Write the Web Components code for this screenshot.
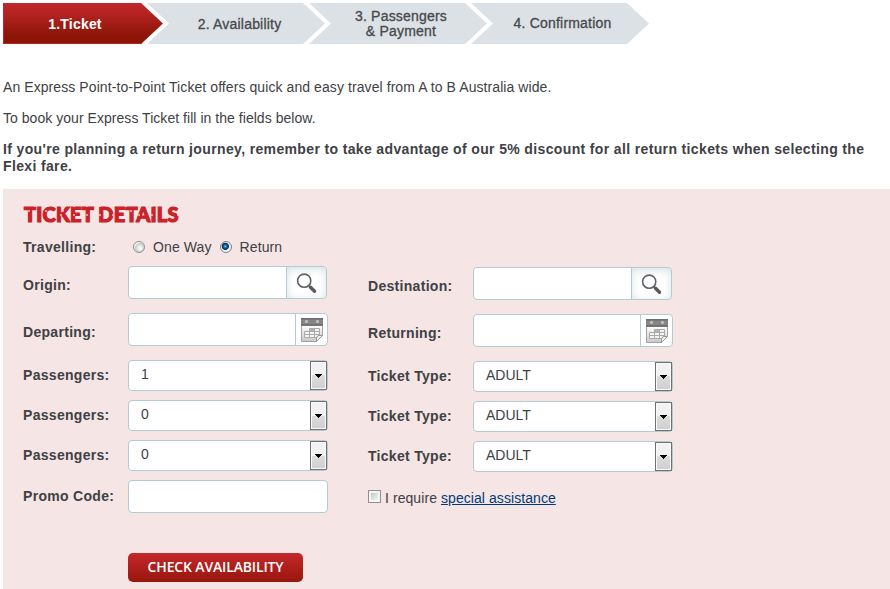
<!DOCTYPE html>
<html lang="en">
<head>
<meta charset="utf-8">
<title>Express Ticket</title>
<style>
body {
  margin: 0;
  padding: 3px 0 0 3px;
  width: 887px;
  height: 586px;
  overflow: hidden;
  background: #fff;
  color: #404145;
  font: 14px/17px "Liberation Sans", Arial, sans-serif;
}

.intro {
  margin-top: 35px;
}

.intro p {
  margin: 0 0 14px;
  letter-spacing: .04px;
}

.intro .lead {
  letter-spacing: .08px;
}

.intro .notice {
  font-weight: bold;
  letter-spacing: .36px;
}
</style>
</head>
<body>

<booking-steps>
  <booking-step active>1.Ticket</booking-step>
  <booking-step style="--nudge: 7px; --drop: 2px">2. Availability</booking-step>
  <booking-step style="--nudge: 6px; --drop: 1px">3. Passengers<br>&amp; Payment</booking-step>
  <booking-step style="--nudge: 5px">4. Confirmation</booking-step>
</booking-steps>

<div class="intro">
  <p class="lead">An Express Point-to-Point Ticket offers quick and easy travel from A to B Australia wide.</p>
  <p>To book your Express Ticket fill in the fields below.</p>
  <p class="notice">If you're planning a return journey, remember to take advantage of our 5% discount for all return tickets when selecting the Flexi fare.</p>
</div>

<ticket-panel>
  <span slot="title">Ticket Details</span>
  <form-row slot="travel" label="Travelling:">
    <radio-option>One Way</radio-option>
    <radio-option checked>Return</radio-option>
  </form-row>

  <form-row slot="left" label="Origin:" low><lookup-field type="search"></lookup-field></form-row>
  <form-row slot="left" label="Departing:" low><lookup-field type="date"></lookup-field></form-row>
  <form-row slot="left" label="Passengers:"><select-box>1</select-box></form-row>
  <form-row slot="left" label="Passengers:"><select-box>0</select-box></form-row>
  <form-row slot="left" label="Passengers:"><select-box>0</select-box></form-row>
  <form-row slot="left" label="Promo Code:"><lookup-field></lookup-field></form-row>

  <form-row slot="right" label="Destination:" low><lookup-field type="search"></lookup-field></form-row>
  <form-row slot="right" label="Returning:" low><lookup-field type="date"></lookup-field></form-row>
  <form-row slot="right" label="Ticket Type:"><select-box>ADULT</select-box></form-row>
  <form-row slot="right" label="Ticket Type:"><select-box>ADULT</select-box></form-row>
  <form-row slot="right" label="Ticket Type:"><select-box>ADULT</select-box></form-row>
  <check-option slot="right">I require <a href="#">special assistance</a></check-option>

  <action-button slot="actions">CHECK AVAILABILITY</action-button>
</ticket-panel>

<script>
const FIELD_BORDER = "#b3cbd1";
const PANEL = "#f5e5e4";

// every element here is static markup in an open root
class BaseElement extends HTMLElement {
  constructor() {
    super();
    this.attachShadow({ mode: "open" });
  }

  connectedCallback() {
    this.shadowRoot.innerHTML = `<style>${this.css()}</style>${this.html()}`;
  }

  css() { return ""; }
  html() { return "<slot></slot>"; }
}

class BookingSteps extends BaseElement {
  css() {
    return `
:host { display: flex; height: 41px; }
::slotted(booking-step:not(:first-child)) { margin-left: -16px; }
`;
  }
}

class BookingStep extends BaseElement {
  css() {
    return `
:host {
  display: flex;
  align-items: center;
  justify-content: center;
  box-sizing: border-box;
  width: 178px;
  padding: var(--drop, 0) 0 0 var(--nudge, 0);
  background: #dce1e5;
  clip-path: polygon(0 0, 156px 0, 100% 50%, 156px 100%, 0 100%, 22px 50%);
  color: #46494d;
  font-size: 14px;
  line-height: 15px;
  text-align: center;
  letter-spacing: .2px;
  -webkit-text-stroke: .3px currentColor;
}
:host([active]) {
  width: 160px;
  padding: 1px 16px 0 0;
  background: linear-gradient(#c1272c, #b52322 25%, #8c1507 80%, #8c1507);
  box-shadow: inset 1px 1px #c4262b, inset 0 -1px #b72021;
  clip-path: polygon(0 0, 138px 0, 100% 50%, 138px 100%, 0 100%);
  color: #fff;
  font-weight: bold;
  -webkit-text-stroke: 0;
}
`;
  }

  html() { return "<span><slot></slot></span>"; }
}

class TicketPanel extends BaseElement {
  css() {
    return `
:host {
  display: block;
  box-sizing: border-box;
  height: 400px;
  padding: 14px 0 0 21px;
  background: ${PANEL};
}
h2 {
  position: relative;
  width: max-content;
  margin: 0;
  color: #cb2229;
  font: 900 20px/22px Lato, sans-serif;
  letter-spacing: .2px;
  text-transform: uppercase;
  -webkit-text-stroke: 1.2px currentColor;
}
/* worn-print specks over the lettering */
h2::after {
  content: "";
  position: absolute;
  inset: 0;
  background:
    radial-gradient(circle at 5px 8px, ${PANEL} .5px, transparent 1px) 0 0 / 17px 13px,
    radial-gradient(circle at 11px 3px, ${PANEL} .5px, transparent 1px) 0 0 / 13px 9px;
}
.travel { margin: 14px 0 0 -1px; }
.columns {
  display: grid;
  grid-template-columns: 345px 305px;
  margin: 10px 0 0 -1px;
}
.column {
  display: flex;
  flex-direction: column;
  gap: 9px;
}
.right { padding-top: 1px; }
.actions { margin: 40px 0 0 104px; }
`;
  }

  html() {
    return `
<h2><slot name="title"></slot></h2>
<div class="travel"><slot name="travel"></slot></div>
<div class="columns">
  <div class="column left"><slot name="left"></slot></div>
  <div class="column right"><slot name="right"></slot></div>
</div>
<div class="actions"><slot name="actions"></slot></div>
`;
  }
}

class FormRow extends BaseElement {
  css() {
    return `
:host { display: flex; align-items: center; }
:host([low]) { margin-bottom: 5px; }
.label {
  flex: none;
  width: 105px;
  font-weight: bold;
  letter-spacing: .3px;
}
:host([low]) .label { padding-top: 5px; }
`;
  }

  html() {
    return `<div class="label">${this.getAttribute("label")}</div><slot></slot>`;
  }
}

class RadioOption extends BaseElement {
  css() {
    return `
:host { display: flex; align-items: center; margin-left: 5px; letter-spacing: .1px; }
:host(:not([checked])) { margin-right: 3px; }
i {
  width: 10px;
  height: 10px;
  margin: 0 8px 2px 0;
  border: 1px solid #8e8f8f;
  border-radius: 50%;
  background: radial-gradient(circle at 60% 60%, #f6f6f6 15%, #c5c8ca 55%, #f4f4f4 60%);
}
:host([checked]) i {
  border-color: #778391;
  background: radial-gradient(circle at 43% 43%, #6fd4f5 0, #1689bd 14%, #123a5a 32%, #17324b 40%, #eef2f5 50%);
}
`;
  }

  html() { return "<i></i><slot></slot>"; }
}

const SEARCH_ICON = `
<svg width="40" height="31" viewBox="0 0 40 31">
  <circle cx="17.2" cy="13.7" r="6.6" fill="#fff" stroke="#616264" stroke-width="1.6"/>
  <path d="M21.8 18.6l1.8 1.9" stroke="#616264" stroke-width="1.8"/>
  <path d="M23.5 20.3l4 4" stroke="#58595b" stroke-width="3.4" stroke-linecap="round"/>
</svg>`;

const DATE_ICON = `
<svg width="22" height="24" viewBox="0 0 22 24">
  <defs><linearGradient id="g" x2="0" y2="1"><stop stop-color="#fff"/><stop offset="1" stop-color="#c9c9c9"/></linearGradient></defs>
  <path d="M.5 7h21v10.500l-6 6H.5z" fill="url(#g)" stroke="#a2a2a2"/>
  <path d="M0 0h22v8H0z" fill="#858585"/>
  <path d="M0 0h22v1.500H0z" fill="#6c6c6c"/>
  <path d="M0 6h22v1.800H0z" fill="#707070"/>
  <circle cx="5.500" cy="3.500" r="1.700" fill="#bbb"/>
  <circle cx="16.500" cy="3.500" r="1.700" fill="#bbb"/>
  <path d="M8.500 10.500h10v9h-15v-6h15M3.500 16.500h15M8.500 10.500v9M13.500 10.500v9" fill="#f4f4f4" stroke="#aaa"/>
  <path d="M9 11h4v2H9z" fill="#b5b5b5"/>
  <path d="M15.500 23.500v-3.500l1.500-2.500h4.500z" fill="#eee" stroke="#9b9b9b"/>
</svg>`;

class LookupField extends BaseElement {
  css() {
    return `
:host {
  display: flex;
  box-sizing: border-box;
  width: 200px;
  height: 33px;
  border: 1px solid ${FIELD_BORDER};
  border-radius: 4px;
  background: #fff;
  overflow: hidden;
}
:host([type="search"]) { width: 199px; }
input {
  flex: 1;
  min-width: 0;
  padding: 0 12px;
  border: 0;
  outline: 0;
  background: none;
  font: inherit;
}
.icon {
  display: flex;
  align-items: center;
  justify-content: center;
  width: 31px;
  border-left: 1px solid ${FIELD_BORDER};
}
.icon.search {
  width: 39px;
  box-shadow: inset 0 2px 8px #d3e1e4;
}
svg { display: block; flex: none; }
`;
  }

  html() {
    var type = this.getAttribute("type");
    var icons = { search: SEARCH_ICON, date: DATE_ICON };
    var icon = icons[type] ? `<div class="icon ${type}">${icons[type]}</div>` : "";
    return `<input type="text">${icon}`;
  }
}

class SelectBox extends BaseElement {
  css() {
    return `
:host {
  display: flex;
  justify-content: space-between;
  box-sizing: border-box;
  width: 200px;
  height: 31px;
  border: 1px solid ${FIELD_BORDER};
  border-radius: 4px;
  background: #fff;
}
.value { padding: 5px 0 0 12px; }
.arrow {
  display: flex;
  align-items: center;
  justify-content: center;
  box-sizing: border-box;
  width: 17px;
  height: 29px;
  border: 1px solid #707070;
  background: linear-gradient(#f2f2f2 50%, #dcdcdc 50%, #cfcfcf);
  box-shadow: inset 0 0 0 1px #fafafa;
}
.arrow svg { margin-top: 1px; }
`;
  }

  html() {
    return `
<span class="value"><slot></slot></span>
<span class="arrow"><svg width="7" height="4" shape-rendering="crispEdges"><path d="M0 0h7v1h-1v1h-1v1h-1v1h-1v-1h-1v-1h-1v-1h-1z"/></svg></span>
`;
  }
}

class CheckOption extends BaseElement {
  css() {
    return `
:host { display: flex; margin-top: 9px; letter-spacing: .07px; }
i {
  box-sizing: border-box;
  width: 13px;
  height: 13px;
  margin-right: 4px;
  border: 1px solid #8e8f8f;
  background: linear-gradient(135deg, #c3c7cb, #f3f3f3) content-box, #f4f4f4;
  padding: 2px;
}
::slotted(a) { color: #003b79; }
`;
  }

  html() { return "<i></i><span><slot></slot></span>"; }
}

class ActionButton extends BaseElement {
  css() {
    return `
:host { display: block; width: 175px; }
button {
  display: block;
  width: 100%;
  height: 29px;
  padding: 0 0 1px;
  border: 0;
  border-radius: 5px;
  background: linear-gradient(#c5272c, #97170c);
  color: #fff;
  font: 600 14px/26px "Open Sans", sans-serif;
  letter-spacing: -.15px;
}
`;
  }

  html() { return "<button><slot></slot></button>"; }
}

customElements.define("booking-steps", BookingSteps);
customElements.define("booking-step", BookingStep);
customElements.define("ticket-panel", TicketPanel);
customElements.define("form-row", FormRow);
customElements.define("radio-option", RadioOption);
customElements.define("lookup-field", LookupField);
customElements.define("select-box", SelectBox);
customElements.define("check-option", CheckOption);
customElements.define("action-button", ActionButton);
</script>
</body>
</html>
